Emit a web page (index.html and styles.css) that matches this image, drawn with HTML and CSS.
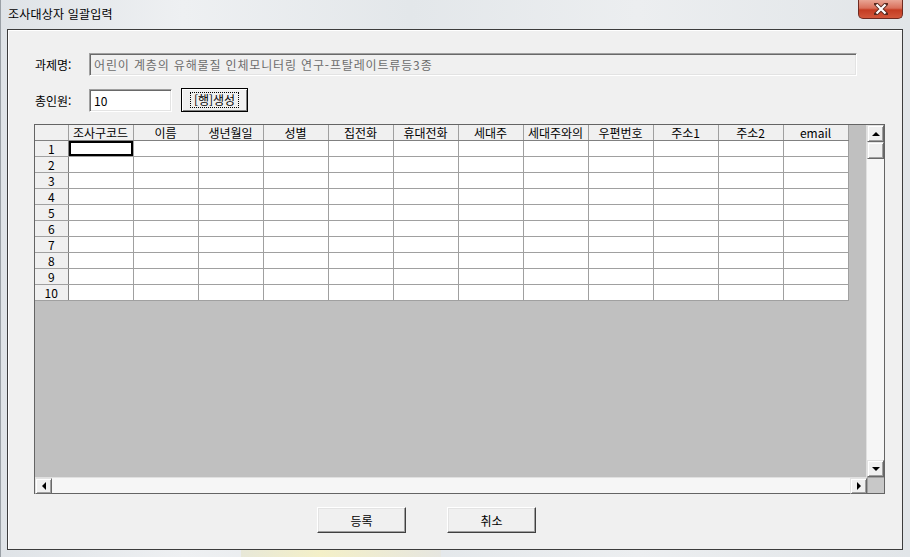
FILE: index.html
```html
<!DOCTYPE html>
<html lang="ko">
<head>
    <meta charset="UTF-8">
    <title>조사대상자 일괄입력</title>
    <link rel="stylesheet" href="styles.css">
</head>
<body>
    <div class="window">
        <div class="titlebar">
            <div class="title">조사대상자 일괄입력</div>
            <div class="close-btn">
                <svg width="14" height="12" viewBox="0 0 14 12">
                    <path d="M2 1 L12 11 M12 1 L2 11" stroke="#5a2a20" stroke-width="4" stroke-linecap="square"/>
                    <path d="M2.5 1.5 L11.5 10.5 M11.5 1.5 L2.5 10.5" stroke="#fff" stroke-width="2.2"/>
                </svg>
            </div>
        </div>

        <div class="client">
            <div class="form-row first">
                <span class="label">과제명:</span>
                <div class="textbox disabled wide">어린이 계층의 유해물질 인체모니터링 연구-프탈레이트류등3종</div>
            </div>
            <div class="form-row second">
                <span class="label">총인원:</span>
                <div class="textbox short">10</div>
                <div class="button default"><span class="focus">[행]생성</span></div>
            </div>

            <div class="grid">
                <div class="grid-main">
                    <div class="grid-view">
                        <table class="sheet">
                            <colgroup>
                                <col class="c-head">
                                <col span="12" class="c-data">
                            </colgroup>
                            <thead>
                                <tr>
                                    <th></th>
                                    <th>조사구코드</th>
                                    <th>이름</th>
                                    <th>생년월일</th>
                                    <th>성별</th>
                                    <th>집전화</th>
                                    <th>휴대전화</th>
                                    <th>세대주</th>
                                    <th>세대주와의</th>
                                    <th>우편번호</th>
                                    <th>주소1</th>
                                    <th>주소2</th>
                                    <th>email</th>
                                </tr>
                            </thead>
                            <tbody>
                                <tr><th>1</th><td class="active"></td><td></td><td></td><td></td><td></td><td></td><td></td><td></td><td></td><td></td><td></td><td></td></tr>
                                <tr><th>2</th><td></td><td></td><td></td><td></td><td></td><td></td><td></td><td></td><td></td><td></td><td></td><td></td></tr>
                                <tr><th>3</th><td></td><td></td><td></td><td></td><td></td><td></td><td></td><td></td><td></td><td></td><td></td><td></td></tr>
                                <tr><th>4</th><td></td><td></td><td></td><td></td><td></td><td></td><td></td><td></td><td></td><td></td><td></td><td></td></tr>
                                <tr><th>5</th><td></td><td></td><td></td><td></td><td></td><td></td><td></td><td></td><td></td><td></td><td></td><td></td></tr>
                                <tr><th>6</th><td></td><td></td><td></td><td></td><td></td><td></td><td></td><td></td><td></td><td></td><td></td><td></td></tr>
                                <tr><th>7</th><td></td><td></td><td></td><td></td><td></td><td></td><td></td><td></td><td></td><td></td><td></td><td></td></tr>
                                <tr><th>8</th><td></td><td></td><td></td><td></td><td></td><td></td><td></td><td></td><td></td><td></td><td></td><td></td></tr>
                                <tr><th>9</th><td></td><td></td><td></td><td></td><td></td><td></td><td></td><td></td><td></td><td></td><td></td><td></td></tr>
                                <tr><th>10</th><td></td><td></td><td></td><td></td><td></td><td></td><td></td><td></td><td></td><td></td><td></td><td></td></tr>
                            </tbody>
                        </table>
                    </div>
                    <div class="vscroll">
                        <div class="sb-btn"><span class="arr up"></span></div>
                        <div class="sb-thumb"></div>
                        <div class="sb-track"></div>
                        <div class="sb-btn"><span class="arr down"></span></div>
                    </div>
                </div>
                <div class="grid-foot">
                    <div class="hscroll">
                        <div class="sb-btn"><span class="arr left"></span></div>
                        <div class="sb-track"></div>
                        <div class="sb-btn"><span class="arr right"></span></div>
                    </div>
                    <div class="corner"></div>
                </div>
            </div>

            <div class="actions">
                <div class="button action">등록</div>
                <div class="button action">취소</div>
            </div>
        </div>
        <div class="frame-bottom"></div>
    </div>
</body>
</html>
```

FILE: styles.css
```css
body {
    margin: 0;
    font-family: "Noto Sans CJK KR", "Noto Sans", sans-serif;
    font-size: 12px;
    color: #000;
    background: #dfe3e6;
}

.window {
    width: 910px;
    height: 557px;
    box-sizing: border-box;
    background: linear-gradient(90deg, #dfe3e7 0%, #eef0f2 20%, #e3e7ea 45%, #eceef0 70%, #e1e5e8 100%);
    border-left: 1px solid #9aa0a6;
    display: flex;
    flex-direction: column;
    overflow: hidden;
}

/* title bar */
.titlebar {
    height: 29px;
    display: flex;
    justify-content: space-between;
    align-items: flex-start;
    padding: 0 7px 0 7px;
}

.title {
    margin-top: 6px;
    line-height: 16px;
    letter-spacing: 0.2px;
}

.close-btn {
    width: 45px;
    height: 19px;
    box-sizing: border-box;
    border: 1px solid #6e2a20;
    border-top: none;
    border-radius: 0 0 5px 5px;
    background: linear-gradient(180deg, #e9a594 0%, #d9705b 45%, #c43c22 55%, #d2573b 100%);
    display: flex;
    justify-content: center;
    align-items: center;
}

/* client area */
.client {
    margin-left: 6px;
    width: 896px;
    height: 521px;
    box-sizing: border-box;
    background: #f0f0f0;
    border: 1px solid #3c3c3c;
    box-shadow: inset 1px 1px 0 #fff;
    padding-left: 27px;
    display: flex;
    flex-direction: column;
}

.form-row {
    display: flex;
    align-items: center;
    height: 23px;
}

.form-row.first { margin-top: 23px; }
.form-row.second { margin-top: 13px; }

.label {
    width: 54px;
    line-height: 16px;
}

.textbox {
    height: 23px;
    box-sizing: border-box;
    border-top: 1px solid #a0a0a0;
    border-left: 1px solid #a0a0a0;
    border-right: 1px solid #fff;
    border-bottom: 1px solid #fff;
    box-shadow: inset 1px 1px 0 #696969, inset -1px -1px 0 #e3e3e3;
    background: #fff;
    padding: 3px 4px 0 4px;
    line-height: 16px;
}

.textbox.disabled {
    background: #f0f0f0;
    color: #6d6d6d;
    letter-spacing: 0.85px;
}

.wide { width: 768px; }
.short { width: 83px; }

.button {
    box-sizing: border-box;
    background: #f0f0f0;
    border-top: 1px solid #fff;
    border-left: 1px solid #fff;
    border-right: 1px solid #404040;
    border-bottom: 1px solid #404040;
    box-shadow: inset -1px -1px 0 #a0a0a0, inset 1px 1px 0 #e3e3e3;
    display: flex;
    justify-content: center;
    align-items: center;
}

.button.default {
    margin-left: 9px;
    width: 67px;
    height: 24px;
    margin-top: -1px;
    border-color: #000;
    box-shadow: inset 1px 1px 0 #fff, inset -1px -1px 0 #808080;
}

.focus {
    border: 1px dotted #000;
    padding: 0 3px;
    line-height: 14px;
}

/* grid */
.grid {
    margin-top: 12px;
    margin-left: -1px;
    width: 851px;
    height: 370px;
    box-sizing: border-box;
    border: 1px solid #646464;
    display: flex;
    flex-direction: column;
}

.grid-main {
    flex: 1;
    display: flex;
    min-height: 0;
}

.grid-view {
    flex: 1;
    background: #c0c0c0;
    overflow: hidden;
}

.sheet {
    border-collapse: collapse;
    table-layout: fixed;
    width: 813px;
    background: #fff;
}

.c-head { width: 33px; }
.c-data { width: 65px; }

.sheet th,
.sheet td {
    height: 15px;
    padding: 0;
    border: 1px solid #a0a0a0;
    font-weight: normal;
    line-height: 14px;
    text-align: center;
    white-space: nowrap;
    overflow: hidden;
}

.sheet thead th {
    background: #f0f0f0;
    border-top: none;
    border-bottom-color: #808080;
}

.sheet tbody th {
    background: #f0f0f0;
    border-right-color: #808080;
}

.sheet tr > :first-child { border-left: none; }

.sheet td.active {
    box-shadow: inset 0 0 0 2px #000;
}

/* scrollbars */
.vscroll {
    width: 17px;
    display: flex;
    flex-direction: column;
    background: #f6f6f6;
    border-left: 1px solid #e0e0e0;
}

.sb-btn {
    width: 17px;
    height: 17px;
    box-sizing: border-box;
    background: #f0f0f0;
    border-top: 1px solid #e3e3e3;
    border-left: 1px solid #e3e3e3;
    border-right: 1px solid #696969;
    border-bottom: 1px solid #696969;
    box-shadow: inset 1px 1px 0 #fff, inset -1px -1px 0 #a0a0a0;
    display: flex;
    justify-content: center;
    align-items: center;
    flex-shrink: 0;
}

.sb-thumb {
    height: 17px;
    box-sizing: border-box;
    background: #f0f0f0;
    border-top: 1px solid #e3e3e3;
    border-left: 1px solid #e3e3e3;
    border-right: 1px solid #696969;
    border-bottom: 1px solid #696969;
    box-shadow: inset 1px 1px 0 #fff, inset -1px -1px 0 #a0a0a0;
}

.sb-track {
    flex: 1;
    background: #f6f6f6;
}

.arr {
    width: 0;
    height: 0;
    border: 4px solid transparent;
}

.arr.up { border-bottom-color: #000; border-top-width: 0; }
.arr.down { border-top-color: #000; border-bottom-width: 0; }
.arr.left { border-right-color: #000; border-left-width: 0; }
.arr.right { border-left-color: #000; border-right-width: 0; }

.grid-foot {
    height: 16px;
    display: flex;
}

.hscroll {
    flex: 1;
    display: flex;
    background: #f6f6f6;
    border-top: 1px solid #e0e0e0;
}

.hscroll .sb-btn { height: 16px; }

.corner {
    width: 17px;
    background: #c8c8c8;
    border-left: 1px solid #a0a0a0;
    border-top: 1px solid #a0a0a0;
    box-sizing: border-box;
}

/* bottom buttons */
.actions {
    display: flex;
    gap: 41px;
    margin-top: 13px;
    padding-left: 282px;
}

.button.action {
    width: 89px;
    height: 26px;
}

.frame-bottom {
    flex: 1;
    margin-left: 240px;
    width: 200px;
    background: linear-gradient(90deg, #e8e8d8, #f4f0c8 40%, #e6e6e0);
}
```
